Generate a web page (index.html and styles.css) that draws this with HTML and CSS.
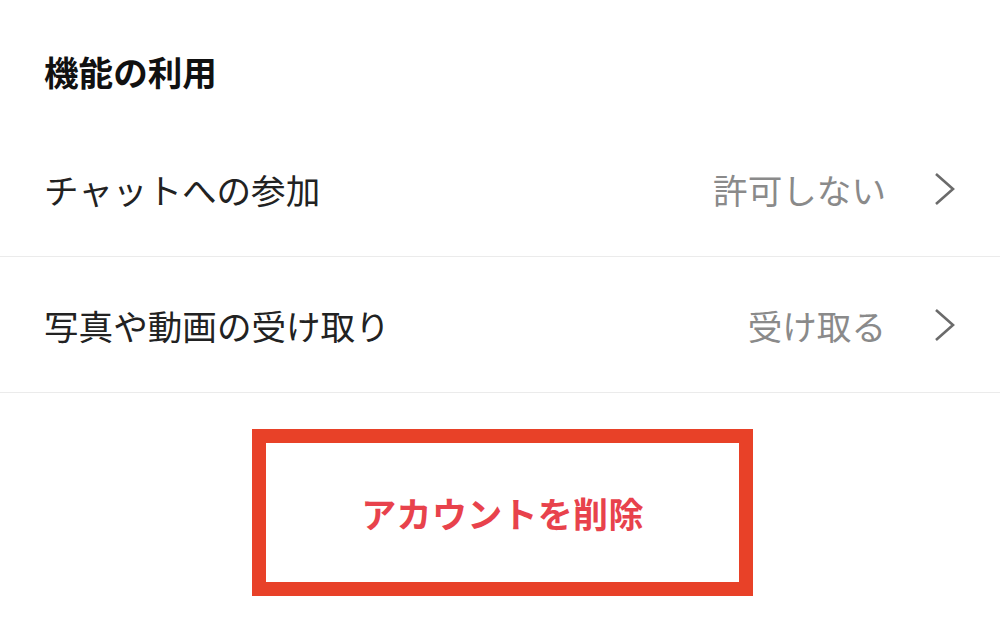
FILE: index.html
```html
<!DOCTYPE html>
<html lang="ja">
<head>
<meta charset="utf-8">
<link rel="stylesheet" href="styles.css">
</head>
<body>
<div class="page">
  <div class="section-title">機能の利用</div>
  <div class="row">
    <span class="label">チャットへの参加</span>
    <span class="value">許可しない</span>
    <svg class="chev" viewBox="0 0 22 34" width="22" height="34"><path d="M2 2 L19 17 L2 32" fill="none" stroke="#6b6b6b" stroke-width="2.6"/></svg>
  </div>
  <div class="row">
    <span class="label">写真や動画の受け取り</span>
    <span class="value">受け取る</span>
    <svg class="chev" viewBox="0 0 22 34" width="22" height="34"><path d="M2 2 L19 17 L2 32" fill="none" stroke="#6b6b6b" stroke-width="2.6"/></svg>
  </div>
  <div class="btn-wrap">
    <div class="delete-btn">アカウントを削除</div>
  </div>
</div>
</body>
</html>
```
FILE: styles.css
```css
html, body {
  margin: 0;
  padding: 0;
  background: #ffffff;
}
body {
  font-family: "Noto Sans CJK JP", "Noto Sans", sans-serif;
  width: 1000px;
  height: 639px;
  overflow: hidden;
}
.section-title {
  height: 121px;
  box-sizing: border-box;
  padding: 47px 0 0 44px;
  font-size: 34.6px;
  line-height: 48px;
  font-weight: 700;
  color: #111;
}
.row {
  display: flex;
  align-items: center;
  height: 136px;
  box-sizing: border-box;
  padding: 0 44px 0 44px;
  border-bottom: 1.5px solid #ebebeb;
}
.label {
  flex: 1;
  font-size: 34.6px;
  color: #222;
  line-height: 48px;
}
.value {
  font-size: 34.6px;
  color: #8a8a8a;
  line-height: 48px;
  margin-right: 48px;
}
.chev {
  display: block;
}
.btn-wrap {
  padding: 36px 0 0 252px;
}
.delete-btn {
  width: 501px;
  height: 167px;
  box-sizing: border-box;
  border: 14px solid #e84128;
  display: flex;
  align-items: center;
  justify-content: center;
  font-size: 35px;
  font-weight: 700;
  letter-spacing: 0.3px;
  color: #e8424c;
}
```
